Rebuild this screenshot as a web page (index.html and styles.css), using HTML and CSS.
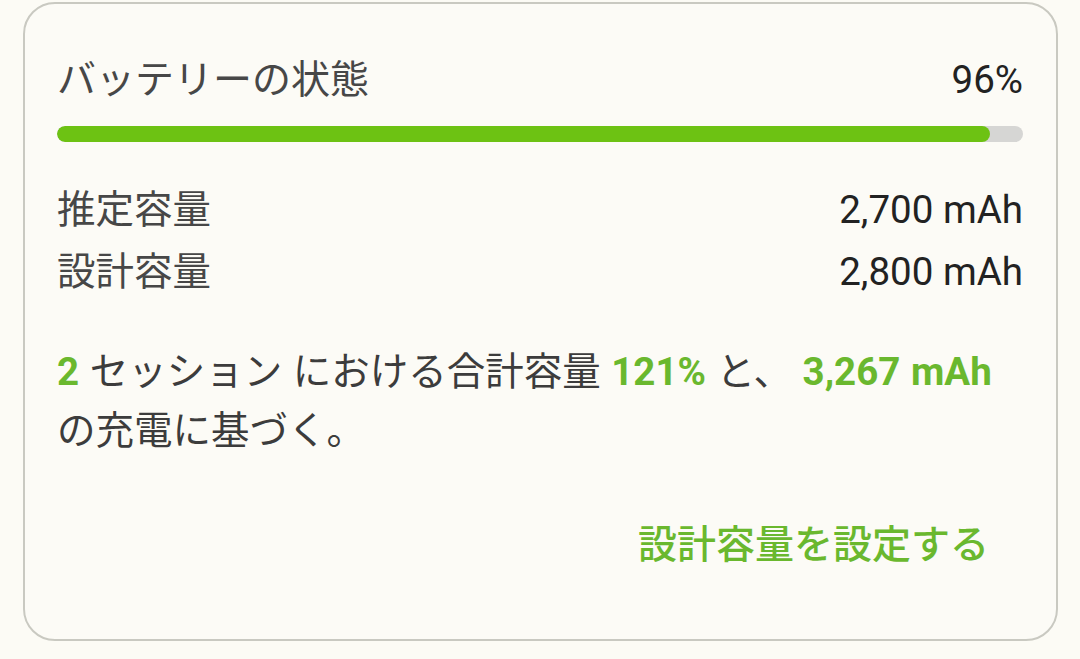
FILE: index.html
```html
<!DOCTYPE html>
<html lang="ja">
<head>
<meta charset="utf-8">
<link rel="stylesheet" href="styles.css">
</head>
<body>
<div class="card">
  <div class="head">
    <span class="title">バッテリーの状態</span>
    <span class="pct">96%</span>
  </div>
  <div class="track"><div class="fill" style="width:96.6%"></div></div>
  <div class="rows">
    <div class="row"><span class="label">推定容量</span><span class="val">2,700 mAh</span></div>
    <div class="row"><span class="label">設計容量</span><span class="val">2,800 mAh</span></div>
  </div>
  <p class="desc"><b class="g">2</b> セッション における合計容量 <b class="g">121%</b> と、 <b class="g">3,267 mAh</b><br>の充電に基づく。</p>
  <div class="actions"><span class="btn">設計容量を設定する</span></div>
</div>
</body>
</html>
```

FILE: styles.css
```css
html, body {
  margin: 0;
  padding: 0;
  background: #fcfbf5;
}
body {
  font-family: Roboto, "Noto Sans CJK JP", sans-serif;
  color: #3c3c3c;
  width: 1080px;
  height: 659px;
  overflow: hidden;
}
.card {
  box-sizing: border-box;
  margin: 2px 0 0 23px;
  width: 1035px;
  height: 639px;
  border: 2px solid #c9c9c1;
  border-radius: 32px;
  background: #fcfbf6;
  padding: 50px 33px 0 32px;
  display: flex;
  flex-direction: column;
}
.head {
  display: flex;
  justify-content: space-between;
  align-items: center;
  font-size: 39px;
  line-height: 52px;
}
.title { color: #474747; }
.pct { color: #222; font-size: 38.5px; }
.track {
  margin-top: 20px;
  height: 16px;
  border-radius: 8px;
  background: #d6d6d4;
  overflow: hidden;
}
.fill {
  height: 100%;
  background: #6dc213;
  border-radius: 8px;
}
.rows {
  margin-top: 37px;
  display: flex;
  flex-direction: column;
}
.row {
  display: flex;
  justify-content: space-between;
  align-items: center;
  font-size: 38.5px;
  line-height: 62px;
}
.label { color: #474747; }
.val { color: #222; }
.desc {
  margin: 39px 0 0 0;
  font-size: 38.5px;
  line-height: 59px;
  color: #3c3c3c;
  word-spacing: 1px;
}
.g { color: #6ab82e; font-weight: 700; }
.actions {
  margin-top: 60px;
  display: flex;
  justify-content: flex-end;
  padding-right: 34px;
}
.btn {
  color: #6ab82e;
  font-size: 39px;
  line-height: 50px;
  font-weight: 500;
}
```
